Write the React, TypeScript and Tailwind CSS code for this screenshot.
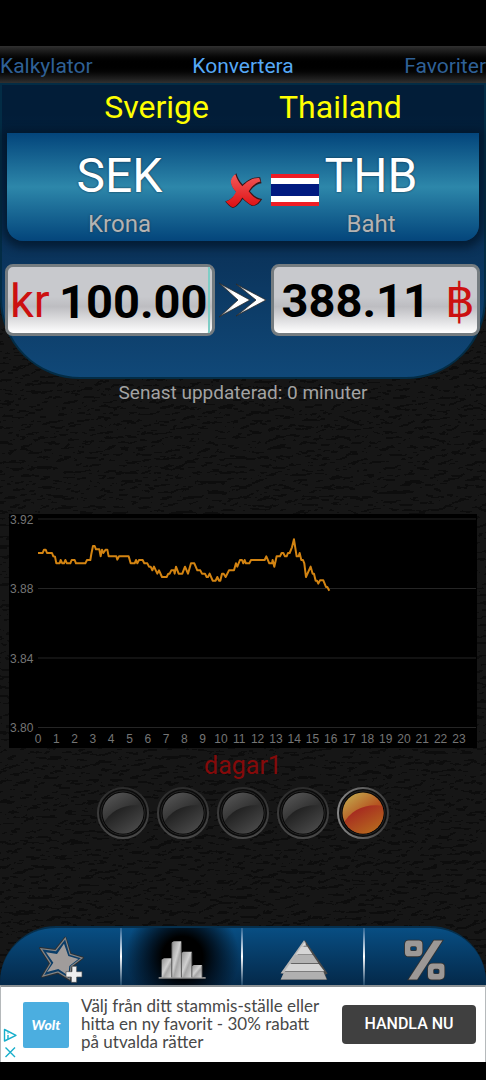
import React, { useState } from "react";

const HOURS = Array.from({ length: 24 }, (_, i) => i);
const RATES = ["3.92", "3.88", "3.84", "3.80"];
const HOUR_STEP = 18.3;

// Rate samples of the day, three units per chart pixel.
const SAMPLES =
  "24,69 38,69 42,59 47,59 51,69 66,69 70,79 75,80 79,100 89,100 92,90 97,100 102,100 106,90 111,100 121,100 125,90 134,90 138,100 166,100 171,90 181,90 184,72 189,48 194,48 198,58 208,58 212,79 216,59 220,69 227,59 232,59 236,79 259,79 262,89 267,79 296,79 302,100 314,100 318,90 322,100 327,90 338,90 343,100 352,100 357,110 362,110 367,121 372,110 382,131 387,121 396,141 410,141 415,131 419,131 424,121 432,121 434,131 438,110 446,131 457,131 465,110 474,131 483,100 493,100 502,121 511,121 516,131 525,131 530,141 534,141 539,131 548,152 557,152 562,141 567,152 571,152 576,131 581,131 587,141 597,121 612,121 618,100 622,110 630,90 636,90 640,100 644,90 648,100 658,100 663,90 704,90 709,79 718,100 726,100 728,90 733,110 740,79 750,79 755,69 760,69 765,79 770,79 774,69 779,69 786,52 792,28 800,79 806,79 809,69 814,90 819,90 823,100 828,141 842,110 848,131 852,131 857,152 861,152 865,161 870,151 880,151 888,171 892,171 898,182";

function Leather() {
  return (
    <svg className="absolute inset-0 h-full w-full" aria-hidden="true">
      <filter id="leather" x="0" y="0" width="100%" height="100%">
        <feTurbulence type="fractalNoise" baseFrequency="0.09 0.2" numOctaves={3} seed={7} result="n" />
        <feDiffuseLighting in="n" surfaceScale={0.8} lightingColor="#161616" diffuseConstant={1}>
          <feDistantLight azimuth={250} elevation={54} />
        </feDiffuseLighting>
      </filter>
      <rect width="100%" height="100%" fill="#141414" />
      <rect width="100%" height="100%" filter="url(#leather)" />
    </svg>
  );
}

function CrossIcon() {
  return (
    <svg viewBox="72 64 117 112" className="h-[37px] w-[39px]" aria-hidden="true">
      <defs>
        <linearGradient id="cross" x1="0" y1="0" x2="0" y2="1">
          <stop offset="0" stopColor="#f25a5a" />
          <stop offset="1" stopColor="#dd0f12" />
        </linearGradient>
      </defs>
      <path
        d="M109 68C112 80 119 93 128 102C141 90 161 77 181 80L185 98C170 100 160 110 150 122C160 134 172 145 187 146C180 160 168 168 156 167C146 162 137 154 128 146C120 158 111 170 98 173C90 170 82 161 75 153C92 148 102 138 109 125C99 114 93 104 93 91C97 80 102 74 109 68Z"
        fill="#3a1418"
      />
      <path
        d="M106 71C109 83 117 97 127 107C141 93 160 80 178 82L182 93C166 97 155 108 146 122C155 134 167 147 182 148C174 159 166 166 157 165C146 160 136 151 127 141C119 154 110 167 98 171C89 167 84 160 77 153C93 149 102 137 108 124C98 113 92 103 92 91C95 81 100 75 106 71Z"
        fill="url(#cross)"
      />
    </svg>
  );
}

function ThaiFlag() {
  return (
    <svg viewBox="0 0 48 32" className="h-8 w-12" role="img" aria-label="Thailand">
      <rect width="48" height="32" fill="#ee1c25" />
      <rect y="4" width="48" height="24" fill="#fff" />
      <rect y="10" width="48" height="12" fill="#001a80" />
    </svg>
  );
}

function Chevrons() {
  return (
    <svg viewBox="0 0 48 38" className="h-[38px] w-12" aria-hidden="true">
      <defs>
        <linearGradient id="chev" x1="0" y1="0" x2="1" y2="0">
          <stop offset="0" stopColor="#8c8c8c" />
          <stop offset=".45" stopColor="#fff" />
        </linearGradient>
      </defs>
      <path d="M0 2L31 19L0 36L19 19Z" fill="url(#chev)" stroke="#2c2c2c" strokeWidth=".8" />
      <path d="M17 3L47 19L17 35L37 19Z" fill="url(#chev)" stroke="#2c2c2c" strokeWidth=".8" />
    </svg>
  );
}

function Chart() {
  return (
    <svg viewBox="0 0 468 234" className="block w-full bg-black" role="img" aria-label="SEK / THB">
      {RATES.map((rate, i) => (
        <g key={rate}>
          <path d={`M29 ${5 + i * 69.5}H467`} stroke="#252525" strokeWidth="1.2" />
          <text x="1" y={9.5 + i * 69.5} fill="#757575" fontSize="12" fontFamily="Liberation Sans, sans-serif">
            {rate}
          </text>
        </g>
      ))}
      {HOURS.map((h) => (
        <text
          key={h}
          x={29 + h * HOUR_STEP}
          y="229"
          fill="#757575"
          fontSize="12"
          textAnchor="middle"
          fontFamily="Liberation Sans, sans-serif"
        >
          {h}
        </text>
      ))}
      <g transform="translate(21 16) scale(.3333)">
        <polyline points={SAMPLES} fill="none" stroke="#d38412" strokeWidth="6" strokeLinejoin="round" />
      </g>
    </svg>
  );
}

function Lamp({ on }: { on: boolean }) {
  return (
    <svg viewBox="0 0 52 52" className="h-[52px] w-[52px]" aria-hidden="true">
      <defs>
        <clipPath id="lens">
          <circle cx="26" cy="26" r="20.500" />
        </clipPath>
        <linearGradient id="ring" x1="0" y1="0" x2="0" y2="1">
          <stop offset="0" stopColor="#2c2c2c" />
          <stop offset="1" stopColor="#484848" />
        </linearGradient>
        <linearGradient id="ringOn" x1="0" y1="0" x2="1" y2="0">
          <stop offset="0" stopColor="#858585" />
          <stop offset="1" stopColor="#3c3c3c" />
        </linearGradient>
        <linearGradient id="off1" x1="0" y1="0" x2=".6" y2="1">
          <stop offset="0" stopColor="#5c5c5c" />
          <stop offset=".6" stopColor="#303030" />
        </linearGradient>
        <linearGradient id="off2" x1="0" y1="0" x2="1" y2="1">
          <stop offset=".15" stopColor="#1a1a1a" />
          <stop offset="1" stopColor="#555" />
        </linearGradient>
        <linearGradient id="on1" x1=".1" y1="0" x2=".8" y2="1">
          <stop offset="0" stopColor="#c4ae50" />
          <stop offset=".55" stopColor="#b55420" />
        </linearGradient>
        <linearGradient id="on2" x1="0" y1="0" x2=".8" y2="1">
          <stop offset=".25" stopColor="#a62a20" />
          <stop offset="1" stopColor="#b8701e" />
        </linearGradient>
      </defs>
      <circle cx="26" cy="26" r="25" fill="#0b0b0b" stroke={on ? "url(#ringOn)" : "url(#ring)"} strokeWidth="2" />
      <circle cx="26" cy="26" r="22" fill="#050505" stroke="#262626" strokeWidth="1" />
      <circle cx="26" cy="26" r="20.500" fill={on ? "url(#on1)" : "url(#off1)"} />
      <path d="M4 40C14 22 28 16 48 19V48H4Z" fill={on ? "url(#on2)" : "url(#off2)"} clipPath="url(#lens)" />
    </svg>
  );
}

function StarIcon() {
  return (
    <svg viewBox="108 60 144 144" className="h-12 w-12" aria-hidden="true">
      <path
        d="M193 68L208 117L246 128L212 155L208 196L171 173L123 185L147 145L117 99L163 105Z"
        fill="#0a3d68"
        stroke="#2d3033"
        strokeWidth="6"
        strokeLinejoin="round"
      />
      <path
        d="M193 70L207 118L243 129L210 154L206 192L171 171L126 183L149 145L120 101L164 107Z"
        fill="#0a3d68"
        stroke="#858585"
        strokeWidth="3.500"
      />
      <path d="M189 86L202 123L232 132L205 153L202 182L172 162L138 171L157 143L135 112L168 117Z" fill="#a09c9b" />
      <path d="M213 154H227V170H243V186H227V202H211V186H195V170H213Z" fill="#eee" stroke="#4c4c4c" strokeWidth="2" />
    </svg>
  );
}

function BarsIcon() {
  return (
    <svg viewBox="472 60 146 144" className="h-12 w-12" aria-hidden="true">
      <defs>
        <linearGradient id="bar" x1="0" y1="0" x2="1" y2="1">
          <stop offset="0" stopColor="#8e8e8e" />
          <stop offset=".45" stopColor="#d0d0d0" />
          <stop offset=".6" stopColor="#a6a6a6" />
          <stop offset="1" stopColor="#d8d8d8" />
        </linearGradient>
      </defs>
      <path d="M474 187H617V192H474Z" fill="#8d8d8d" />
      <path d="M483 134L490 130H514V188H483Z" fill="url(#bar)" />
      <path d="M514 82L520 78H543V188H514Z" fill="url(#bar)" />
      <path d="M543 114L549 110H575V188H543Z" fill="url(#bar)" />
      <path d="M575 154L581 150H606V188H575Z" fill="url(#bar)" />
      <path d="M514 84V188M543 84V188M575 112V188M606 152V188" stroke="#4a4a4a" strokeWidth="2.500" />
    </svg>
  );
}

function PyramidIcon() {
  return (
    <svg viewBox="108 60 146 144" className="h-12 w-12" aria-hidden="true">
      <path d="M184 75L253 176L246 180L252 195H110L118 178L110 175Z" fill="#4a4a4a" />
      <path d="M181 75L187 84L119 176L110 175Z" fill="#b6b6b6" />
      <path d="M182 82L189 92H175Z" fill="#ddd" />
      <path d="M173 94H191L207 118H156Z" fill="#d6d6d6" />
      <path d="M155 120H208L225 145H138Z" fill="#b3b3b3" />
      <path d="M137 147H226L243 169H122Z" fill="#d4d4d4" />
      <path d="M121 171H240L250 194H110Z" fill="#b0b0b0" />
    </svg>
  );
}

function PercentIcon() {
  const shape =
    "M497 76H528Q539 76 539 87V108Q539 124 524 124H498Q486 124 486 112V89Q486 76 497 76ZM507 93Q502 93 502 98V103Q502 108 507 108H517Q522 108 522 103V98Q522 93 517 93ZM574 76H600L523 194H497ZM572 146H595Q606 146 606 157V180Q606 194 592 194H568Q556 194 556 182V162Q556 146 572 146ZM577 162Q572 162 572 167V173Q572 178 577 178H586Q591 178 591 173V167Q591 162 586 162Z";
  return (
    <svg viewBox="474 60 146 144" className="h-12 w-12" aria-hidden="true">
      <path d={shape} fill="#333" stroke="#333" strokeWidth="5" fillRule="evenodd" />
      <path d={shape} fill="#9c9896" fillRule="evenodd" />
    </svg>
  );
}

function AdChoices() {
  return (
    <svg viewBox="0 0 14 34" className="h-[34px] w-3.5" fill="none" stroke="#17aecb" strokeWidth="1.400" aria-hidden="true">
      <path d="M1.500 1.500V13L13 7.300Z" strokeLinejoin="round" />
      <path d="M5 4.500V5.500M5 7V11" />
      <path d="M2.500 19.500L12 29M12 19.500L2.500 29" />
    </svg>
  );
}

const FIELD =
  "flex h-[72px] min-w-0 items-center rounded-lg border-[3px] border-[#757c80] bg-linear-to-b from-[#c8c9cd] from-45% via-[#bdbdc1] via-60% to-white text-[47px]";

const NAV = [
  { label: "Lägg till favorit", icon: <StarIcon /> },
  { label: "Diagram", icon: <BarsIcon />, active: true },
  { label: "Pyramid", icon: <PyramidIcon /> },
  { label: "Procent", icon: <PercentIcon /> },
];

export default function App() {
  const [amount, setAmount] = useState("100.00");
  const [range, setRange] = useState(4);

  return (
    <div className="flex min-h-screen flex-col bg-black pt-[46px] pb-[18px] font-[Roboto,sans-serif]">
      <nav className="grid h-[37px] shrink-0 grid-cols-3 items-center bg-linear-to-b from-[#303030] via-black to-[#303030] pt-1 text-[21px] text-[#2f6096]">
        <button className="text-left">Kalkylator</button>
        <button className="text-center text-[#56a8f5]">Konvertera</button>
        <button className="text-right">Favoriter</button>
      </nav>

      <main className="relative flex flex-1 flex-col">
        <Leather />

        <section className="relative h-[296px] rounded-b-[80px] border-2 border-[#032c45] bg-linear-to-b from-[#021d38] from-10% via-[#0a3259] via-55% to-[#104878]">
          <div className="flex h-12 items-center justify-center gap-[70px] pb-1 pl-5 text-[32px] text-[#ffff00]">
            <span>Sverige</span>
            <span>Thailand</span>
          </div>

          <div className="mx-[5px] flex h-[108px] items-center rounded-b-2xl bg-linear-to-b from-[#04457b] via-[#2d87aa] to-[#04457b] pt-2 pr-14 pl-2 shadow-[0_2px_8px_5px_rgba(1,18,36,0.65)]">
            <button className="flex flex-1 flex-col items-center pt-0.5 text-white">
              <span className="text-5xl leading-[64px] [text-shadow:0_0_2px_#123]">SEK</span>
              <span className="text-2xl text-[#b3b3b3] [text-shadow:0_0_2px_#234]">Krona</span>
            </button>
            <span className="mr-2 pb-0.5">
              <CrossIcon />
            </span>
            <span className="pb-0.5">
              <ThaiFlag />
            </span>
            <button className="flex w-[104px] flex-col items-center pt-0.5 text-white">
              <span className="text-5xl leading-[64px] [text-shadow:0_0_2px_#123]">THB</span>
              <span className="text-2xl text-[#b3b3b3] [text-shadow:0_0_2px_#234]">Baht</span>
            </button>
          </div>

          <div className="mt-[23px] mr-1 ml-[3px] grid grid-cols-[1fr_auto_1fr] items-center">
            <label className={`${FIELD} pl-0.5`}>
              <span className="pt-0.5 text-[#cc1010]">kr</span>
              <input
                value={amount}
                onChange={(e) => setAmount(e.target.value)}
                inputMode="decimal"
                aria-label="Belopp i SEK"
                className="h-full w-0 flex-1 border-r-2 border-[#7fcdc6] bg-transparent pt-0.5 text-right font-bold text-black outline-none"
              />
              <span className="w-0.5" />
            </label>
            <button className="mx-1" aria-label="Byt valutor">
              <Chevrons />
            </button>
            <output className={`${FIELD} justify-between pt-0.5 pr-0.5 pl-2`}>
              <span className="font-bold text-black">388.11</span>
              <span className="text-[#cc1010]">฿</span>
            </output>
          </div>
        </section>

        <p className="relative pt-0.5 text-center text-[19px] leading-6 text-[#a3a3a3]">Senast uppdaterad: 0 minuter</p>

        <div className="flex-[5]" />
        <div className="relative mx-[9px]">
          <Chart />
        </div>

        <fieldset className="relative flex flex-col items-center">
          <legend className="mx-auto text-[25px] leading-9 text-[#840a0a]">dagar1</legend>
          <div className="flex gap-2 pt-[3px]">
            {[0, 1, 2, 3, 4].map((i) => (
              <label key={i} className="relative">
                <input
                  type="radio"
                  name="range"
                  aria-label={`Period ${i + 1}`}
                  checked={range === i}
                  onChange={() => setRange(i)}
                  className="absolute inset-0 opacity-0"
                />
                <Lamp on={range === i} />
              </label>
            ))}
          </div>
        </fieldset>
        <div className="flex-[4]" />

        <nav className="relative grid h-[59px] grid-cols-4 overflow-hidden rounded-t-[56px] border-t-2 border-[#062f4c] bg-linear-to-b from-[#084e83] to-[#04294a]">
          {NAV.map((item, i) => (
            <button
              key={item.label}
              aria-label={item.label}
              className={
                item.active
                  ? "relative flex items-center justify-center bg-[radial-gradient(circle_at_center,#000_30%,rgba(0,5,12,0.7)_50%,transparent_85%)] pt-1"
                  : "relative flex items-center justify-center pt-1"
              }
            >
              {item.icon}
              {i < 3 && (
                <span className="absolute top-0 right-0 h-full w-0.5 bg-linear-to-b from-[#2b6594] via-white to-[#1b4668]" />
              )}
            </button>
          ))}
        </nav>
      </main>

      <aside className="flex h-[77px] shrink-0 items-center border-x border-t-2 border-[#b5b9bb] border-t-[#8b9093] bg-white pr-[9px] font-[Lato,sans-serif]">
        <a href="#adchoices" aria-label="Annonsval" className="ml-0.5 self-end">
          <AdChoices />
        </a>
        <span className="ml-1.5 flex h-[46px] w-[46px] shrink-0 items-center justify-center rounded-xs bg-[#4baee0] text-sm font-black text-white italic">
          Wolt
        </span>
        <p className="ml-3 flex-1 pb-0.5 text-[17px] leading-[18px] text-[#484848]">
          Välj från ditt stammis-ställe eller hitta en ny favorit - 30% rabatt på utvalda rätter
        </p>
        <button className="ml-4 h-[39px] w-[134px] shrink-0 rounded bg-[#404040] pb-0.5 font-[Roboto,sans-serif] text-base font-medium text-white">
          HANDLA NU
        </button>
      </aside>
    </div>
  );
}
